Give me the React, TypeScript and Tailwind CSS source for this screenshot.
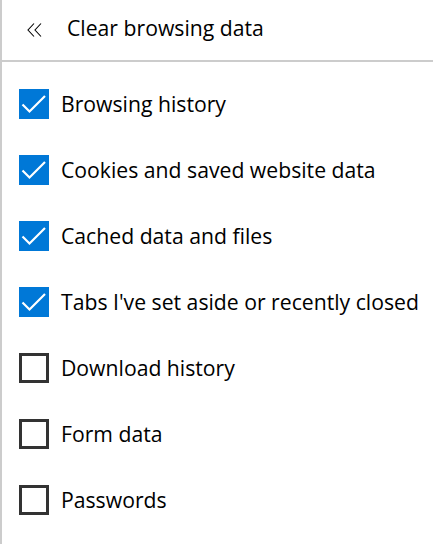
import React from "react";

const items: { label: string; checked: boolean }[] = [
  { label: "Browsing history", checked: true },
  { label: "Cookies and saved website data", checked: true },
  { label: "Cached data and files", checked: true },
  { label: "Tabs I've set aside or recently closed", checked: true },
  { label: "Download history", checked: false },
  { label: "Form data", checked: false },
  { label: "Passwords", checked: false },
];

function Box({ checked }: { checked: boolean }) {
  if (checked) {
    return (
      <div className="w-[30px] h-[30px] bg-[#0078d7] shrink-0 flex items-center justify-center">
        <svg width="30" height="30" viewBox="0 0 30 30">
          <path d="M3.5 15.5 L10.5 22.5 L26 7" fill="none" stroke="#fff" strokeWidth="2.2" />
        </svg>
      </div>
    );
  }
  return <div className="w-[30px] h-[30px] border-[3px] border-[#333] shrink-0" />;
}

export default function App() {
  return (
    <div
      className="w-[433px] h-[544px] bg-white border-l-2 border-[#cccccc] overflow-hidden text-black"
      style={{ fontFamily: '"Open Sans", "Noto Sans", sans-serif' }}
    >
      <div className="h-[60px] flex items-center pl-[25px] pb-[5px]">
        <svg width="18" height="16" viewBox="0 0 18 16" className="mt-[4px]">
          <path d="M7 1.5 L1 8 L7 14.5 M14 1.5 L8 8 L14 14.5" fill="none" stroke="#000" strokeWidth="1.1" />
        </svg>
        <span className="ml-[22px] text-[21.2px] leading-none">Clear browsing data</span>
      </div>
      <div className="h-[2px] bg-[#cccccc]" />
      <div className="pt-[27px] flex flex-col gap-[36px] pl-[17px]">
        {items.map((it) => (
          <div key={it.label} className="flex items-center h-[30px]">
            <Box checked={it.checked} />
            <span className="ml-[12px] text-[21.2px] leading-none whitespace-nowrap">{it.label}</span>
          </div>
        ))}
      </div>
    </div>
  );
}
